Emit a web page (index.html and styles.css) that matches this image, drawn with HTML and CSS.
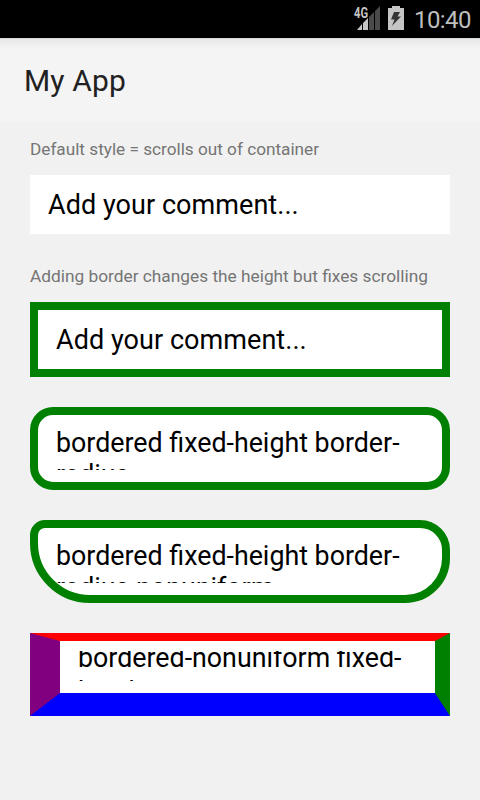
FILE: index.html
```html
<!DOCTYPE html>
<html lang="en">
<head>
<meta charset="utf-8">
<title>My App</title>
<link rel="stylesheet" href="styles.css">
</head>
<body>
<div class="status">
  <svg class="signal" width="28" height="26" viewBox="0 0 28 26">
    <path fill="#4a4a4a" d="M28 0V24H23V5ZM22 6V24H17V11Z"/>
    <path fill="#c5c5c5" d="M16 12V24H11V17ZM10 18V24H5Z"/>
    <text class="network" x="2" y="12" textLength="14" lengthAdjust="spacingAndGlyphs">4G</text>
  </svg>
  <svg class="battery" width="16" height="24" viewBox="0 0 16 24">
    <path fill="#c5c5c5" d="M4 0H12V2H16V24H0V2H4Z"/>
    <path fill="#333" d="M6 6H12L9.500 10.500H13L4 20L6.500 13.500H3Z"/>
  </svg>
  <span class="clock">10:40</span>
</div>
<header class="bar"><h1 class="title">My App</h1></header>
<main class="content">
  <p class="hint first">Default style = scrolls out of container</p>
  <div class="field plain"><div class="text">Add your comment...</div></div>
  <p class="hint second">Adding border changes the height but fixes scrolling</p>
  <div class="field bordered"><div class="text">Add your comment...</div></div>
  <div class="field fixed rounded"><div class="text"><div class="lines">bordered fixed-height border-<br>radius</div></div></div>
  <div class="field fixed uneven"><div class="text"><div class="lines">bordered fixed-height border-<br>radius nonuniform</div></div></div>
  <div class="field sides"><div class="text"><div class="lines scrolled">bordered-nonuniform fixed-<br>height</div></div></div>
</main>
</body>
</html>
```
FILE: styles.css
```css
* { box-sizing: border-box; }
body {
  margin: 0;
  height: 800px;
  overflow: hidden;
  background: #f1f1f1;
  font-family: Roboto, "Liberation Sans", sans-serif;
}
.status {
  display: flex;
  height: 38px;
  padding: 6px 9px 0 0;
  justify-content: flex-end;
  align-items: flex-start;
  background: #000;
}
.signal { margin-right: 8px; }
.network { font: bold 14px Roboto, sans-serif; fill: #c5c5c5; stroke: #000; stroke-width: 1.5px; paint-order: stroke; }
.battery { margin-right: 10px; }
.clock { width: 57px; font-size: 24px; line-height: 28px; color: #bebebe; white-space: nowrap; letter-spacing: -0.6px; }
.bar {
  display: flex;
  height: 84px;
  padding: 2px 24px 0;
  align-items: center;
  background: linear-gradient(#c8c8c8 0, #e7e7e7 1px, #ececec 4px, #f4f4f4 11px);
}
.title { margin: 0; font-size: 30px; font-weight: 400; line-height: 36px; letter-spacing: 0.15px; color: #212121; }
.content { padding: 16px 30px 0; }
.hint { margin: 0; font-size: 17.2px; line-height: 22px; color: #757575; white-space: nowrap; }
.hint.second { margin-top: 31px; font-size: 17.3px; }
.field { background: #fff; color: #000; font-size: 27px; line-height: 32px; white-space: nowrap; }
.plain { height: 59px; margin-top: 15px; padding: 14px 18px; letter-spacing: 0.05px; }
.bordered { height: 75px; margin-top: 15px; padding: 14px 18px; border: 8px solid #008000; letter-spacing: 0.05px; }
.fixed { height: 83px; margin-top: 30px; padding: 12px 18px; border: 8px solid #008000; }
.fixed .text { height: 43px; overflow: hidden; }
.rounded { border-radius: 23px; }
.uneven { border-radius: 15px 30px 45px 60px; }
.lines { font-size: 26.8px; line-height: 32px; }
.sides {
  height: 83px;
  margin-top: 30px;
  padding: 10px 18px 12px;
  border-style: solid;
  border-width: 8px 15px 23px 30px;
  border-color: #f00 #008000 #00f #800080;
}
.sides .text { height: 30px; overflow: hidden; }
.lines.scrolled { margin-top: -10px; line-height: 34px; }
```
